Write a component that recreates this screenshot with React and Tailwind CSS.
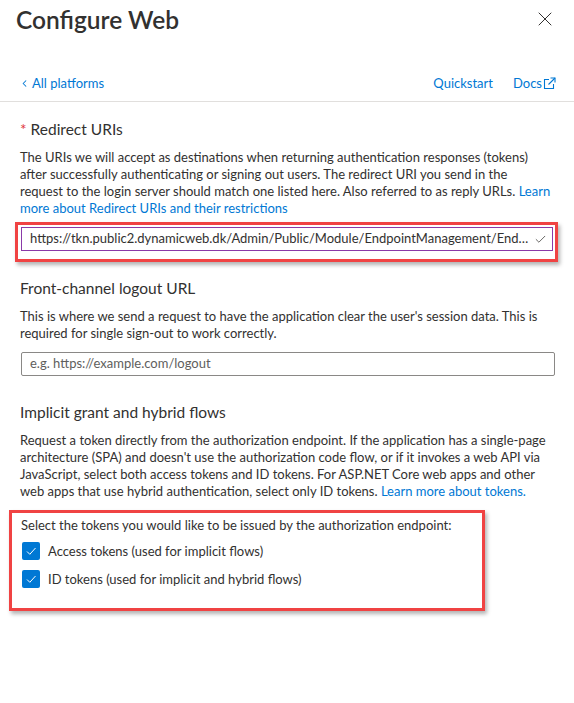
import { X, ChevronLeft, Check } from 'lucide-react'

const FONT = "font-['Lato','Noto_Sans',sans-serif]"

function ExternalIcon() {
  return (
    <svg width="13" height="13" viewBox="0 0 13 13" fill="none" stroke="currentColor" strokeWidth="1.1">
      <path d="M6 2.5H1.5v9h9V7" />
      <path d="M7.5 1h4.5v4.5" />
      <path d="M12 1L5.5 7.5" />
    </svg>
  )
}

function Checkbox() {
  return (
    <span className="w-[18px] h-[18px] rounded-[2px] bg-[#0078d4] flex items-center justify-center shrink-0">
      <svg width="12" height="12" viewBox="0 0 12 12" fill="none" stroke="white" strokeWidth="1">
        <path d="M2 6.5l2.8 2.8L10.5 3" />
      </svg>
    </span>
  )
}

export default function App() {
  return (
    <div className={`${FONT} w-[574px] h-[703px] bg-white text-[#323130] overflow-hidden`}>
      {/* Header */}
      <div className="flex items-start justify-between pl-4 pr-[17px] pt-1">
        <h1 className="text-[24.5px] leading-[32px] font-semibold">Configure Web</h1>
        <button className="mt-[3px] text-[#323130]">
          <X size={24} strokeWidth={1} />
        </button>
      </div>

      {/* Links row */}
      <div className="mt-[37px] flex items-center justify-between pl-5 pr-[18px] pb-2 border-b border-[#e1dfdd] text-[13px] leading-[20px] text-[#0078d4]">
        <a className="flex items-center gap-[2px]">
          <ChevronLeft size={11} strokeWidth={2.2} className="-ml-[1px]" />
          All platforms
        </a>
        <div className="flex items-center gap-[20px]">
          <a>Quickstart</a>
          <a className="flex items-center gap-[1px]">
            Docs
            <ExternalIcon />
          </a>
        </div>
      </div>

      <div className="px-5">
        {/* Redirect URIs */}
        <h2 className="mt-[17px] text-[15.5px] leading-[20px]">
          <span className="text-[#e0393e]">*</span> Redirect URIs
        </h2>
        <p className="mt-[10px] text-[13px] leading-[17px] whitespace-nowrap">
          The URIs we will accept as destinations when returning authentication responses (tokens)
          <br />
          after successfully authenticating or signing out users. The redirect URI you send in the
          <br />
          request to the login server should match one listed here. Also referred to as reply URLs.{' '}
          <a className="text-[#0078d4]">Learn</a>
          <br />
          <a className="text-[#0078d4]">more about Redirect URIs and their restrictions</a>
        </p>
        <div className="mt-[5px] -ml-[5px] w-[543px] border-[3px] border-[#f04343] pl-[3px] pr-[2px] pt-[2px] pb-[8px] shadow-[2px_3px_4px_rgba(0,0,0,0.3)]">
          <div className="h-[24px] border border-[#8a3aa8] flex items-center pl-2 pr-[5px] text-[13px]">
            <span className="flex-1 truncate">
              https://tkn.public2.dynamicweb.dk/Admin/Public/Module/EndpointManagement/EndpointManagement
            </span>
            <Check size={13} strokeWidth={1.5} className="text-[#484644] shrink-0" />
          </div>
        </div>

        {/* Front-channel logout */}
        <h2 className="mt-[16px] text-[15.5px] leading-[20px]">Front-channel logout URL</h2>
        <p className="mt-[10px] text-[13px] leading-[17px] whitespace-nowrap">
          This is where we send a request to have the application clear the user's session data. This is
          <br />
          required for single sign-out to work correctly.
        </p>
        <div className="mt-[10px] ml-[1px] w-[534px] h-[24px] border border-[#8a8886] rounded-[2px] flex items-center pl-2 text-[13px] text-[#605e5c]">
          e.g. https://example.com/logout
        </div>

        {/* Implicit grant */}
        <h2 className="mt-[26px] text-[15.5px] leading-[20px]">Implicit grant and hybrid flows</h2>
        <p className="mt-[10px] text-[13px] leading-[17px] whitespace-nowrap">
          Request a token directly from the authorization endpoint. If the application has a single-page
          <br />
          architecture (SPA) and doesn't use the authorization code flow, or if it invokes a web API via
          <br />
          JavaScript, select both access tokens and ID tokens. For ASP.NET Core web apps and other
          <br />
          web apps that use hybrid authentication, select only ID tokens.{' '}
          <a className="text-[#0078d4]">Learn more about tokens.</a>
        </p>
      </div>

      <div className="mt-[10px] ml-[9px] w-[476px] h-[101px] border-[3px] border-[#f04343] pl-[9px] pt-[4px] shadow-[2px_3px_4px_rgba(0,0,0,0.3)]">
        <p className="text-[13px] leading-[17px] whitespace-nowrap">Select the tokens you would like to be issued by the authorization endpoint:</p>
        <div className="mt-[8px] flex flex-col gap-[10px] pl-[1px]">
          <label className="flex items-center gap-2 text-[13px] leading-[18px]">
            <Checkbox />
            Access tokens (used for implicit flows)
          </label>
          <label className="flex items-center gap-2 text-[13px] leading-[18px]">
            <Checkbox />
            ID tokens (used for implicit and hybrid flows)
          </label>
        </div>
      </div>
    </div>
  )
}
